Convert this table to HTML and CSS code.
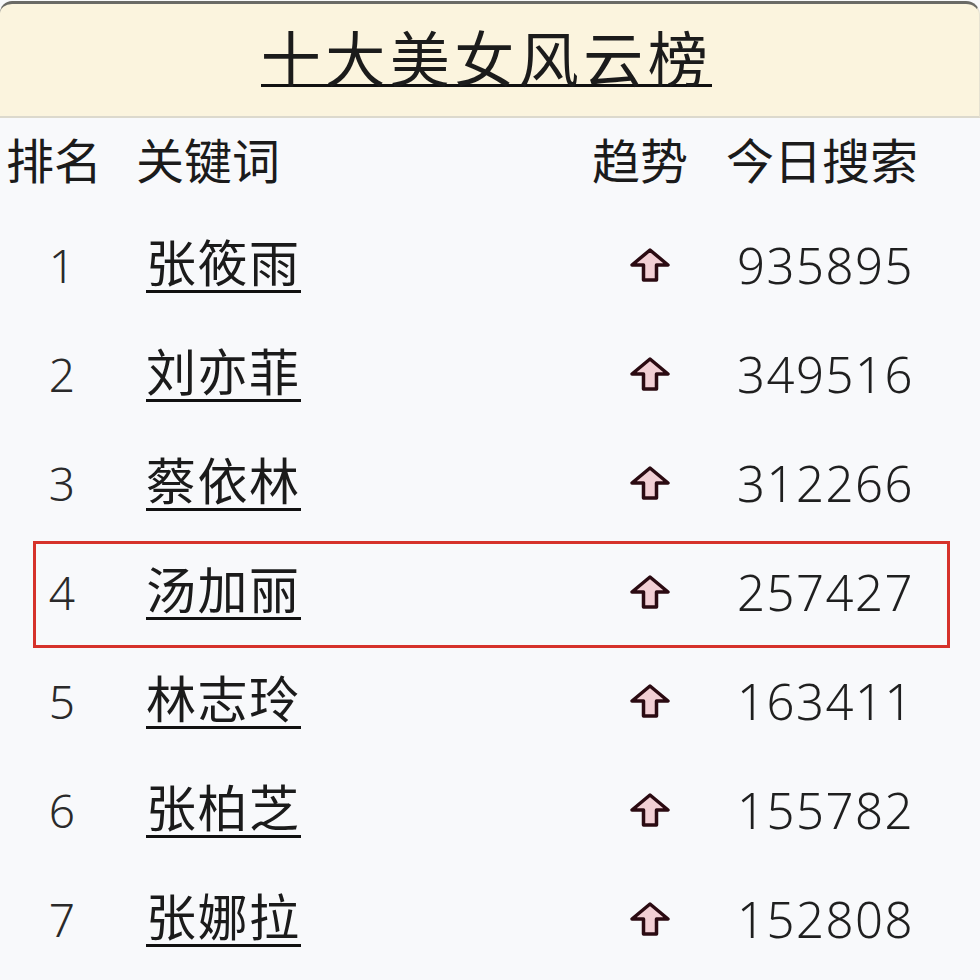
FILE: index.html
```html
<!DOCTYPE html>
<html lang="zh-CN">
<head>
<meta charset="utf-8">
<title>十大美女风云榜</title>
<link rel="stylesheet" href="styles.css">
</head>
<body>
<div class="board">
  <header class="banner">
    <h1 class="title"><span>十大美女风云榜</span></h1>
  </header>
  <div class="head-row">
    <div class="h-rank">排名</div>
    <div class="h-key">关键词</div>
    <div class="h-trend">趋势</div>
    <div class="h-num">今日搜索</div>
  </div>
  <div class="row"><div class="rank">1</div><div class="name"><span>张筱雨</span></div><div class="trend"><svg class="arrow" viewBox="0 0 40 34"><path d="M20 2 L38 17 L26.5 17 L26.5 32 L13.5 32 L13.5 17 L2 17 Z"/></svg></div><div class="num">935895</div></div>
  <div class="row"><div class="rank">2</div><div class="name"><span>刘亦菲</span></div><div class="trend"><svg class="arrow" viewBox="0 0 40 34"><path d="M20 2 L38 17 L26.5 17 L26.5 32 L13.5 32 L13.5 17 L2 17 Z"/></svg></div><div class="num">349516</div></div>
  <div class="row"><div class="rank">3</div><div class="name"><span>蔡依林</span></div><div class="trend"><svg class="arrow" viewBox="0 0 40 34"><path d="M20 2 L38 17 L26.5 17 L26.5 32 L13.5 32 L13.5 17 L2 17 Z"/></svg></div><div class="num">312266</div></div>
  <div class="row highlight"><div class="rank">4</div><div class="name"><span>汤加丽</span></div><div class="trend"><svg class="arrow" viewBox="0 0 40 34"><path d="M20 2 L38 17 L26.5 17 L26.5 32 L13.5 32 L13.5 17 L2 17 Z"/></svg></div><div class="num">257427</div></div>
  <div class="row"><div class="rank">5</div><div class="name"><span>林志玲</span></div><div class="trend"><svg class="arrow" viewBox="0 0 40 34"><path d="M20 2 L38 17 L26.5 17 L26.5 32 L13.5 32 L13.5 17 L2 17 Z"/></svg></div><div class="num">163411</div></div>
  <div class="row"><div class="rank">6</div><div class="name"><span>张柏芝</span></div><div class="trend"><svg class="arrow" viewBox="0 0 40 34"><path d="M20 2 L38 17 L26.5 17 L26.5 32 L13.5 32 L13.5 17 L2 17 Z"/></svg></div><div class="num">155782</div></div>
  <div class="row"><div class="rank">7</div><div class="name"><span>张娜拉</span></div><div class="trend"><svg class="arrow" viewBox="0 0 40 34"><path d="M20 2 L38 17 L26.5 17 L26.5 32 L13.5 32 L13.5 17 L2 17 Z"/></svg></div><div class="num">152808</div></div>
</div>
</body>
</html>
```
FILE: styles.css
```css
* { box-sizing: border-box; }
html, body { margin: 0; padding: 0; }
body {
  width: 980px;
  height: 980px;
  overflow: hidden;
  background: #f8f9fb;
  font-family: "Noto Sans CJK SC", "Noto Sans", sans-serif;
  color: #1b1b1b;
}
.board { width: 980px; }
.banner {
  height: 117px;
  background: #fbf4de;
  border-top: 3px solid #6a6a66;
  border-bottom: 2px solid #dcd9cd;
  border-right: 1px solid #e6e2d2;
  border-radius: 12px 14px 0 0;
  margin-top: 1px;
  display: flex;
  justify-content: center;
}
.title {
  margin: 0 6px 0 0;
  padding-top: 24px;
  font-size: 60px;
  font-weight: 400;
  line-height: 56px;
}
.title span {
  display: inline-block;
  letter-spacing: 4.5px;
  border-bottom: 3px solid #111;
  line-height: 56px;
}
.head-row, .row {
  display: grid;
  grid-template-columns: 124px 466px 110px 1fr;
  align-items: center;
}
.head-row {
  height: 92px;
  font-size: 48px;
  font-weight: 400;
  padding-bottom: 12px;
}
.h-rank { padding-left: 6px; }
.h-key { padding-left: 12px; }
.h-trend { padding-left: 2px; }
.h-num { padding-left: 26px; }
.row {
  height: 109px;
  position: relative;
}
.rank {
  text-align: center;
  font-family: "Noto Sans", sans-serif;
  font-weight: 300;
  font-size: 46px;
  color: #2a2a2a;
}
.name { padding-left: 22px; padding-bottom: 10px; font-size: 50px; font-weight: 400; }
.name span {
  display: inline-block;
  line-height: 56px;
  letter-spacing: 1.5px;
  padding-bottom: 2px;
  border-bottom: 3px solid #111;
}
.trend { display: flex; padding-left: 40px; }
.arrow { width: 40px; height: 34px; }
.arrow path {
  fill: #f2cfd4;
  stroke: #2b0b12;
  stroke-width: 3.5;
  stroke-linejoin: round;
}
.num {
  padding-left: 37px;
  font-family: "Noto Sans", sans-serif;
  font-weight: 300;
  font-size: 49px;
  letter-spacing: 1.5px;
  color: #1f1f1f;
}
.highlight::after {
  content: "";
  position: absolute;
  left: 33px;
  right: 30px;
  top: 4px;
  bottom: -2px;
  border: 3px solid #d6322b;
}
```
